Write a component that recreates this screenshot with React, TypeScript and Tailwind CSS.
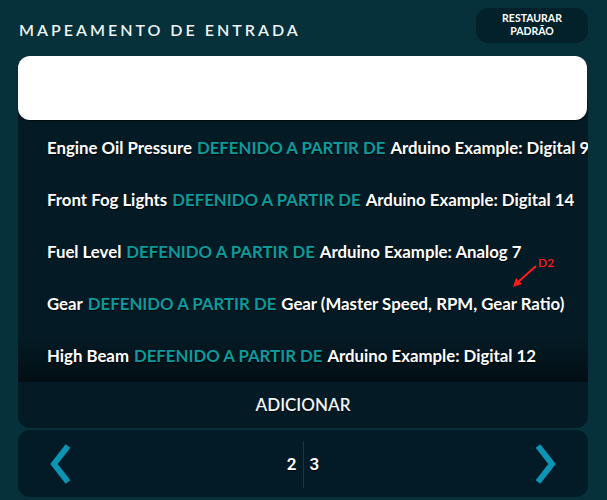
import React from "react";

const rows: { name: string; src: string }[] = [
  { name: "Engine Oil Pressure", src: "Arduino Example: Digital 9" },
  { name: "Front Fog Lights", src: "Arduino Example: Digital 14" },
  { name: "Fuel Level", src: "Arduino Example: Analog 7" },
  { name: "Gear", src: "Gear (Master Speed, RPM, Gear Ratio)" },
  { name: "High Beam", src: "Arduino Example: Digital 12" },
];

export default function App() {
  return (
    <div
      className="relative w-[607px] h-[500px] overflow-hidden bg-[#06303a] px-[18px] flex flex-col text-white"
      style={{ fontFamily: "Lato, 'Open Sans', sans-serif" }}
    >
      {/* header */}
      <div className="flex items-center justify-between h-[56px] pb-[3px]">
        <h1 className="pl-[1px] mt-[6px] text-[16px] font-semibold tracking-[3px] text-[#eef3f4] leading-none">
          MAPEAMENTO DE ENTRADA
        </h1>
        <button className="w-[112px] h-[35px] mr-[1px] -mt-[3px] rounded-[13px] bg-[#03212a] text-[10.5px] font-bold leading-[13px] text-white">
          RESTAURAR
          <br />
          PADRÃO
        </button>
      </div>

      {/* input */}
      <div className="relative z-10 h-[64px] w-[569px] rounded-[12px] bg-white shadow-[0_1px_1px_rgba(0,0,0,0.6)]" />

      {/* list panel */}
      <div className="-mt-[20px] w-[570px] rounded-b-[12px] bg-[#041b25] flex flex-col">
        <div className="relative h-[282px] pt-[22px] overflow-hidden">
          <div className="pointer-events-none absolute left-0 right-0 bottom-0 h-[46px] bg-gradient-to-b from-transparent to-[#020e14]" />
          {rows.map((r) => (
            <div
              key={r.name}
              className="relative h-[52px] flex items-center pl-[29px] whitespace-nowrap text-[16.8px] font-bold [text-shadow:0_1px_1px_rgba(0,0,0,0.9)]"
            >
              <span>{r.name}</span>
              <span className="ml-[5px] text-[#0e9a9c]">DEFENIDO A PARTIR DE</span>
              <span className="ml-[5px]">{r.src}</span>
            </div>
          ))}
        </div>
        <div className="h-[46px] flex items-center justify-center text-[17px] font-semibold text-[#f2f5f6] [text-shadow:0_1px_1px_rgba(0,0,0,0.9)]">
          ADICIONAR
        </div>
      </div>

      {/* pager */}
      <div className="mt-[2px] h-[67px] w-[570px] rounded-[12px] bg-[#031b26] flex items-center justify-between px-[31px]">
        <svg width="24" height="40" viewBox="0 0 24 40" className="shrink-0">
          <polyline points="19,2 5,20 19,38" fill="none" stroke="#0b94b4" strokeWidth="6" />
        </svg>
        <div className="flex items-stretch h-[49px] pt-[2px] text-[17px] font-semibold [text-shadow:0_1px_1px_rgba(0,0,0,0.9)]" style={{ fontFamily: "Roboto, sans-serif" }}>
          <span className="flex items-center pr-[6px] pl-[2px]">2</span>
          <span className="w-px bg-[#0e3b45]" />
          <span className="flex items-center pl-[6px] pr-[2px]">3</span>
        </div>
        <svg width="24" height="40" viewBox="0 0 24 40" className="shrink-0">
          <polyline points="5,2 19,20 5,38" fill="none" stroke="#0b94b4" strokeWidth="6" />
        </svg>
      </div>

      {/* red annotation */}
      <div className="absolute left-[538px] top-[257px] text-[12px] font-semibold text-[#ff1a1a] leading-none">
        D2
      </div>
      <svg className="absolute left-[508px] top-[262px]" width="32" height="30" viewBox="0 0 32 30">
        <line x1="28" y1="4" x2="9" y2="21" stroke="#ff1a1a" strokeWidth="2" />
        <polygon points="5,25 8,16 14,22" fill="#ff1a1a" />
      </svg>
    </div>
  );
}
